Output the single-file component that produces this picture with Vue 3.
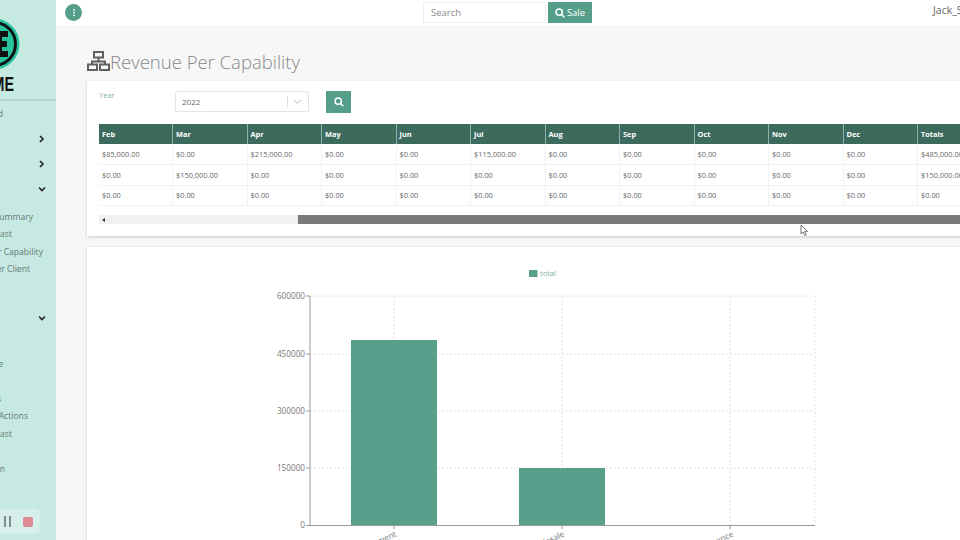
<script setup>
const navRows = [
  { text: 'Dashboard', end: 3, type: 'main' },
  { chevron: 'right', end: 46, type: 'main' },
  { chevron: 'right', end: 46, type: 'main' },
  { chevron: 'down', end: 46, type: 'main' },
  { text: 'Revenue Summary', end: 33, type: 'sub first' },
  { text: 'Forecast', end: 12, type: 'sub' },
  { text: 'Revenue Per Capability', end: 43, type: 'sub' },
  { text: 'Revenue Per Client', end: 30, type: 'sub' },
  { end: 46, type: 'main after' },
  { chevron: 'down', end: 46, type: 'main' },
  { end: 46, type: 'sub first' },
  { text: 'Archive', end: 3, type: 'sub' },
  { end: 46, type: 'sub' },
  { text: 'Tasks', end: 1, type: 'sub' },
  { text: 'Sales Actions', end: 28, type: 'sub' },
  { text: 'Forecast', end: 12, type: 'sub' },
  { end: 46, type: 'sub' },
  { text: 'Admin', end: 5, type: 'sub' }
]

const months = ['Feb', 'Mar', 'Apr', 'May', 'Jun', 'Jul', 'Aug', 'Sep', 'Oct', 'Nov', 'Dec', 'Totals']
const z = '$0.00'
const rows = [
  ['$85,000.00', z, '$215,000.00', z, z, '$115,000.00', z, z, z, z, z, '$485,000.00'],
  [z, '$150,000.00', z, z, z, z, z, z, z, z, z, '$150,000.00'],
  [z, z, z, z, z, z, z, z, z, z, z, z]
]

const ticks = [
  { y: 296, label: '600000' },
  { y: 354, label: '450000' },
  { y: 411, label: '300000' },
  { y: 468, label: '150000' },
  { y: 525, label: '0' }
]
const bars = [
  { x: 351, y: 340, w: 86, h: 185 },
  { x: 519, y: 468, w: 86, h: 57 }
]
const cats = [
  { x: 397, label: 'Development' },
  { x: 565, label: 'Wholesale' },
  { x: 734, label: 'Maintenance' }
]
</script>

<template>
  <div class="app">
    <aside class="sidebar">
      <div class="logo">
        <svg class="logo-mark" width="56" height="56" viewBox="0 0 56 56">
          <circle cx="-6" cy="28" r="25.5" fill="#28c4a0" />
          <circle cx="-6" cy="28" r="21.5" fill="none" stroke="#111" stroke-width="3" />
          <path d="M-6 15h14v6H2v4h5v6H2v4h6v6H-6z" fill="#111" />
        </svg>
        <div class="logo-word">ME</div>
      </div>
      <nav class="nav">
        <div
          v-for="(row, i) in navRows"
          :key="i"
          class="nav-row"
          :class="row.type"
          :style="{ paddingRight: 56 - row.end + 'px' }"
        >
          <span v-if="row.text">{{ row.text }}</span>
          <svg v-else-if="row.chevron" class="chevron" width="8" height="8" viewBox="0 0 8 8">
            <path v-if="row.chevron === 'right'" d="M2 1l3 3-3 3" />
            <path v-else d="M1 2.500l3 3 3-3" />
          </svg>
        </div>
      </nav>
      <div class="recorder">
        <span class="pause"></span>
        <span class="stop"></span>
      </div>
    </aside>

    <div class="main">
      <header class="topbar">
        <button class="info">
          <svg width="4" height="9" viewBox="0 0 4 9"><path d="M1.200 1h1.600v1.600H1.200zM1.200 3.700h1.600v1.600H1.200zM1.200 6.400h1.600V8H1.200z" fill="#fff" /></svg>
        </button>
        <input class="search" placeholder="Search" />
        <button class="sale">
          <svg width="10" height="10" viewBox="0 0 10 10"><circle cx="4.200" cy="4.200" r="3.100" /><path d="M6.500 6.500L9.300 9.300" /></svg>
          Sale
        </button>
        <span class="user">Jack_Smith</span>
      </header>

      <div class="content">
        <h1 class="title">
          <svg width="23" height="20" viewBox="0 0 23 20" fill="none" stroke="#5f5f5f" stroke-width="2">
            <rect x="7" y="1" width="9" height="5.500" />
            <path d="M11.500 6.500v4M5 13.500v-3h13v3" />
            <rect x="1" y="13.500" width="9" height="5.500" />
            <rect x="13" y="13.500" width="9" height="5.500" />
          </svg>
          Revenue Per Capability
        </h1>

        <section class="panel filter-panel">
          <div class="filters">
            <label class="year-label">Year</label>
            <div class="select">
              <span>2022</span>
              <span class="select-sep"></span>
              <svg width="9" height="6" viewBox="0 0 9 6"><path d="M1 1l3.500 3.500L8 1" fill="none" stroke="#bbb" /></svg>
            </div>
            <button class="go">
              <svg width="10" height="10" viewBox="0 0 10 10"><circle cx="4.200" cy="4.200" r="3.100" /><path d="M6.500 6.500L9.300 9.300" /></svg>
            </button>
          </div>

          <table class="grid">
            <thead>
              <tr><th v-for="m in months" :key="m">{{ m }}</th></tr>
            </thead>
            <tbody>
              <tr v-for="(row, i) in rows" :key="i">
                <td v-for="(cell, j) in row" :key="j">{{ cell }}</td>
              </tr>
            </tbody>
          </table>

          <div class="scrollbar">
            <div class="track"><span class="arrow"></span></div>
            <div class="thumb"></div>
          </div>

          <svg class="cursor" width="10" height="13" viewBox="0 0 10 13">
            <path d="M1 1v9l2.200-2 1.600 3.500 1.500-.7L4.700 7.400H7.500z" fill="#fff" stroke="#555" stroke-width=".8" />
          </svg>
        </section>

        <section class="panel chart-panel">
          <svg class="chart" width="873" height="293" viewBox="87 247 873 293">
            <rect x="529" y="270" width="8.500" height="7" fill="#58a08c" />
            <text x="540" y="276" class="legend">total</text>

            <g class="gridlines">
              <line v-for="t in ticks.slice(0, 4)" :key="t.y" x1="310" x2="815" :y1="t.y" :y2="t.y" />
              <line v-for="x in [394, 562, 730, 815]" :key="x" :x1="x" :x2="x" y1="296" y2="525" />
            </g>

            <rect v-for="b in bars" :key="b.x" :x="b.x" :y="b.y" :width="b.w" :height="b.h" fill="#58a08c" />

            <g class="axis">
              <line x1="310" x2="310" y1="296" y2="525" />
              <line x1="306" x2="815" y1="525.500" y2="525.500" />
              <line v-for="t in ticks.slice(0, 4)" :key="t.y" x1="306" x2="310" :y1="t.y" :y2="t.y" />
              <line v-for="x in [394, 562, 730]" :key="x" :x1="x" :x2="x" y1="525" y2="529" />
            </g>

            <text v-for="t in ticks" :key="t.y" x="305" :y="t.y + 3" class="tick">{{ t.label }}</text>
            <text
              v-for="c in cats"
              :key="c.x"
              class="cat"
              :transform="`translate(${c.x} 536) rotate(-25)`"
            >{{ c.label }}</text>
          </svg>
        </section>
      </div>
    </div>
  </div>
</template>

<style>
html, body {
  margin: 0;
  overflow: hidden;
}
</style>

<style scoped>
.app {
  display: flex;
  width: 960px;
  height: 540px;
  overflow: hidden;
  font-family: "Open Sans", "Liberation Sans", sans-serif;
  background: #f7f7f7;
}

.sidebar {
  flex: 0 0 56px;
  width: 56px;
  display: flex;
  flex-direction: column;
  overflow: hidden;
  background: #c6e9e1;
}

.logo {
  height: 101px;
  border-bottom: 2px solid #b5d9d0;
  padding-top: 16px;
  box-sizing: border-box;
}

.logo-mark {
  display: block;
  height: 56px;
}

.logo-word {
  margin-top: 1px;
  width: 14px;
  font: 700 21px/21px "Liberation Sans", sans-serif;
  color: #111;
  transform: scaleX(.68);
  transform-origin: right center;
  display: flex;
  justify-content: flex-end;
  white-space: nowrap;
}

.nav-row {
  display: flex;
  align-items: center;
  justify-content: flex-end;
  white-space: nowrap;
  font-size: 8.600px;
  color: #667a75;
}

.nav-row.main {
  height: 25px;
}

.nav-row.sub {
  height: 17.500px;
}

.nav-row.first {
  margin-top: 7px;
}

.nav-row.after {
  margin-top: 2.500px;
}

.chevron {
  fill: none;
  stroke: #222;
  stroke-width: 1.600;
}

.recorder {
  margin-top: auto;
  margin-bottom: 6px;
  width: 40px;
  height: 25px;
  display: flex;
  align-items: center;
  border-radius: 0 5px 5px 0;
  background: rgba(255, 255, 255, .3);
}

.pause {
  width: 2.500px;
  height: 11px;
  margin-left: 4px;
  border-left: 2.500px solid #7b908c;
  border-right: 2.500px solid #7b908c;
  box-sizing: content-box;
}

.stop {
  width: 10px;
  height: 10px;
  margin-left: 12px;
  border-radius: 2px;
  background: #e08a98;
}

.main {
  flex: 1;
  min-width: 0;
}

.topbar {
  height: 25px;
  display: flex;
  align-items: center;
  background: #fff;
}

.topbar > * {
  flex: none;
}

.info {
  width: 17px;
  height: 17px;
  margin-left: 9px;
  padding: 0;
  border: 0;
  border-radius: 50%;
  display: flex;
  align-items: center;
  justify-content: center;
  background: #559f8a;
}

.search {
  width: 123px;
  height: 21px;
  margin-left: 341px;
  padding: 0 7px;
  box-sizing: border-box;
  border: 1px solid #eee;
  outline: 0;
  font: 9.500px "Open Sans", sans-serif;
  color: #888;
}

.search::placeholder {
  color: #888;
}

.sale {
  width: 44px;
  height: 21px;
  margin-left: 2px;
  padding: 0;
  border: 0;
  display: flex;
  align-items: center;
  justify-content: center;
  gap: 2px;
  font: 9.500px "Open Sans", sans-serif;
  color: #fff;
  background: #559f8a;
}

.sale svg,
.go svg {
  fill: none;
  stroke: #fff;
  stroke-width: 1.500;
}

.user {
  margin-left: 341px;
  margin-bottom: 5px;
  font-size: 10.500px;
  color: #666;
  white-space: nowrap;
}

.content {
  padding-left: 31px;
  width: 960px;
}

.title {
  height: 56px;
  margin: 0;
  display: flex;
  align-items: center;
  padding-top: 16px;
  box-sizing: border-box;
  font-size: 18.500px;
  font-weight: 300;
  color: #888;
}

.panel {
  background: #fff;
  box-shadow: 0 1px 3px rgba(0, 0, 0, .2);
}

.filter-panel {
  position: relative;
  height: 155px;
  padding: 10px 0 0 12px;
  box-sizing: border-box;
}

.filters {
  display: flex;
  align-items: flex-start;
  height: 33px;
}

.year-label {
  width: 76px;
  font-size: 7.500px;
  line-height: 9px;
  color: #7fb5a5;
}

.select {
  width: 134px;
  height: 21px;
  padding: 0 6px;
  box-sizing: border-box;
  display: flex;
  align-items: center;
  border: 1px solid #e4e4e4;
  border-radius: 2px;
  font-size: 8px;
  color: #666;
}

.select span:first-child {
  flex: 1;
}

.select-sep {
  width: 1px;
  height: 11px;
  margin-right: 5px;
  background: #ddd;
}

.go {
  width: 25px;
  height: 22px;
  margin-left: 17px;
  padding: 0;
  border: 0;
  background: #559f8a;
}

.grid {
  width: 893px;
  table-layout: fixed;
  border-collapse: collapse;
  font-size: 7.400px;
  color: #666;
}

.grid th {
  height: 20px;
  padding: 0 3px;
  text-align: left;
  font-weight: 700;
  color: #fff;
  background: #3c6b5d;
  border-left: 1px solid #8fb0a5;
}

.grid th:first-child {
  width: 67px;
  border-left: 0;
}

.grid td:first-child {
  border-left: 0;
}

.grid td {
  height: 19.800px;
  padding: 0 3px;
  border-left: 1px solid #f2f2f2;
  border-bottom: 1px solid #f2f2f2;
  white-space: nowrap;
}

.scrollbar {
  display: flex;
  margin-top: 9px;
  height: 9px;
}

.track {
  width: 199px;
  display: flex;
  align-items: center;
  background: #f1f1f1;
}

.arrow {
  margin-left: 3px;
  border: 2.500px solid transparent;
  border-right: 3px solid #333;
  border-left: 0;
}

.thumb {
  flex: 1;
  background: #7a7a7a;
}

.cursor {
  position: absolute;
  left: 713px;
  top: 143px;
}

.chart-panel {
  margin-top: 11px;
  height: 293px;
}

.chart {
  display: block;
}

.legend {
  font-size: 7.500px;
  fill: #7fae9f;
}

.gridlines line {
  stroke: #e2e2e2;
  stroke-width: 1;
  stroke-dasharray: 2 2;
}

.axis line {
  stroke: #999;
  stroke-width: 1;
}

.tick {
  font-size: 8.200px;
  fill: #777;
  text-anchor: end;
}

.cat {
  font-size: 8.200px;
  fill: #777;
  text-anchor: end;
}
</style>
